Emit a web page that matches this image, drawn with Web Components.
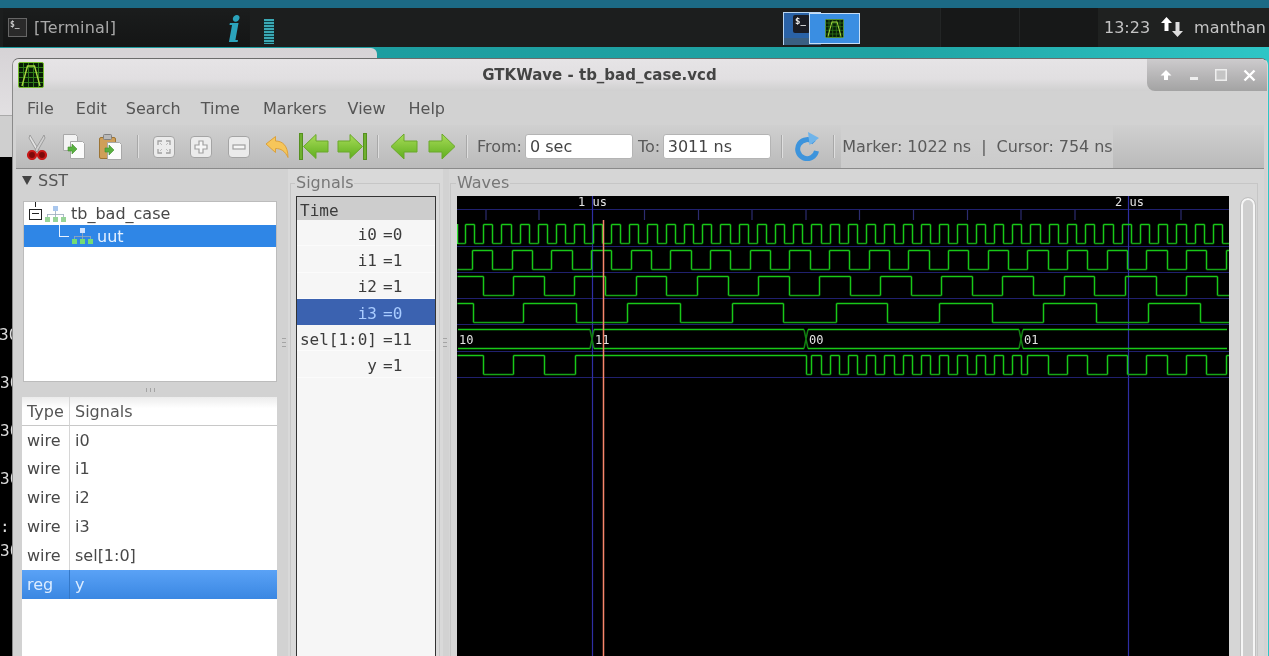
<!DOCTYPE html>
<html>
<head>
<meta charset="utf-8">
<title>GTKWave - tb_bad_case.vcd</title>
<style>
  html, body { margin: 0; height: 100%; background: #1c6a85; }
  body {
    display: flex;
    flex-direction: column;
    width: 1269px;
    height: 656px;
    overflow: hidden;
    font: 16px "DejaVu Sans", sans-serif;
    color: #484848;
    filter: blur(.55px);
  }
</style>
</head>
<body>
<desk-panel></desk-panel>
<desk-area>
  <term-window></term-window>
  <gtk-window name="GTKWave - tb_bad_case.vcd">
    <app-menu></app-menu>
    <app-toolbar></app-toolbar>
    <app-panes>
      <sst-pane></sst-pane>
      <pane-grip></pane-grip>
      <signal-pane></signal-pane>
      <pane-grip></pane-grip>
      <wave-pane></wave-pane>
    </app-panes>
  </gtk-window>
</desk-area>

<script>
// Small drawings shared by the elements below.
const waveLogo = (size) => `
  <svg width="${size}" height="${size}" viewBox="0 0 26 26" style="display:block">
    <rect x=".5" y=".5" width="25" height="25" rx="1.5" fill="#081c06" stroke="#78c030"/>
    <path d="M5.500 1v24M10.500 1v24M15.500 1v24M20.500 1v24M1 5.500h24M1 10.500h24M1 15.500h24M1 20.500h24" stroke="#2f7c18" stroke-width="1"/>
    <path d="M4 24 9.500 4H16.500L22 24" fill="none" stroke="#a6d840" stroke-width="1.400"/>
  </svg>`;

const hierarchy = (top, bottom) => `
  <svg width="21" height="16" viewBox="0 0 21 16" style="display:block">
    <rect x="8" y="0" width="5" height="5" fill="${top}"/>
    <path d="M10.500 5v3M2.500 8.500h16M2.500 8v3M10.500 8v3M18.500 8v3" stroke="#9ab" stroke-width=".8" fill="none"/>
    <rect x="0" y="11" width="5" height="5" fill="${bottom}"/>
    <rect x="8" y="11" width="5" height="5" fill="${bottom}"/>
    <rect x="16" y="11" width="5" height="5" fill="${bottom}"/>
  </svg>`;

const greenDefs = `<defs><linearGradient id="g" x1="0" y1="0" x2="0" y2="1">
  <stop offset="0" stop-color="#a8dc58"/><stop offset="1" stop-color="#5fae1e"/></linearGradient></defs>`;
const pageArrow = (x, y) => `<path d="M${x} ${y + 4}h4v-3l5 5-5 5v-3h-4z" fill="#58b040" stroke="#3f8f2a" stroke-width=".6"/>`;
const zoomBox = (inner) => `
  <rect x=".5" y=".5" width="21" height="21" rx="3.500" fill="#ebebeb" stroke="#a4a4a4"/>${inner}`;

const ICONS = {
  cut: [22, 26, `
    <path d="M4 1 13 16l-2 2L3 4z" fill="#e2e2e2" stroke="#8a8a8a" stroke-width=".7"/>
    <path d="M18 1 9 16l2 2 8-14z" fill="#d0d0d0" stroke="#8a8a8a" stroke-width=".7"/>
    <circle cx="6" cy="21" r="4" fill="#7d0a0a" stroke="#c81818" stroke-width="2.200"/>
    <circle cx="16" cy="21" r="4" fill="#7d0a0a" stroke="#c81818" stroke-width="2.200"/>`],
  copy: [22, 25, `
    <path d="M.5.500h12l2 2v14H.5z" fill="#f2f2f2" stroke="#a8a8a8"/>
    <path d="M7.500 7.500h12l2 2v15h-14z" fill="#fbfbfb" stroke="#a8a8a8"/>
    ${pageArrow(5, 9)}`],
  paste: [23, 26, `
    <rect x=".5" y="3.500" width="16" height="21" rx="1.500" fill="#cf9f58" stroke="#9c7434"/>
    <rect x="4.500" y=".5" width="8" height="5" rx="1" fill="#b8b8b8" stroke="#808080"/>
    <path d="M8.500 8.500h12l2 2v15h-14z" fill="#fbfbfb" stroke="#a8a8a8"/>
    ${pageArrow(6, 10)}`],
  fit: [22, 22, zoomBox(`<path d="M5 9V5h4M13 5h4v4M17 13v4h-4M9 17H5v-4" fill="none" stroke="#a0a0a0" stroke-width="1.300"/><path d="M9 9 7 7M13 9l2-2M13 13l2 2M9 13l-2 2" stroke="#bbb"/>`)],
  plus: [22, 22, zoomBox(`<path d="M9 5h4v4h4v4h-4v4H9v-4H5V9h4z" fill="#f6f6f6" stroke="#a0a0a0" stroke-width="1.200"/>`)],
  minus: [22, 22, zoomBox(`<rect x="5" y="9" width="12" height="4" fill="#f6f6f6" stroke="#a0a0a0" stroke-width="1.200"/>`)],
  undo: [24, 24, `<path d="M1 9 10.500 1.500v4.500C17 6 23 10 23 22.500 20 16 16 13.500 10.500 13.500V17.500Z" fill="#f6c65a" stroke="#dba13c" stroke-width="1"/>`],
  first: [30, 27, `${greenDefs}
    <rect x=".5" y=".5" width="3" height="26" fill="#6fb030" stroke="#559020"/>
    <path d="M4.500 13.500 17 1.500v6.500h12v11H17v6.500z" fill="url(#g)" stroke="#6aa82a"/>`],
  last: [30, 27, `${greenDefs}
    <rect x="26.500" y=".5" width="3" height="26" fill="#6fb030" stroke="#559020"/>
    <path d="M25.500 13.500 13 1.500v6.500H1v11h12v6.500z" fill="url(#g)" stroke="#6aa82a"/>`],
  left: [28, 27, `${greenDefs}<path d="M1 13.500 14 1v7h13v11H14v7z" fill="url(#g)" stroke="#6aa82a"/>`],
  right: [28, 27, `${greenDefs}<path d="M27 13.500 14 1v7H1v11h13v7z" fill="url(#g)" stroke="#6aa82a"/>`],
  reload: [26, 29, `
    <path d="M20 10.500A9.500 9.500 0 1 0 22.500 19" fill="none" stroke="#3d94dc" stroke-width="5"/>
    <path d="M14 0 25 6 15.500 13z" fill="#6fb4ea"/>`],
};

customElements.define("desk-panel", class extends HTMLElement {
  connectedCallback() {
    this.attachShadow({mode: "open"}).innerHTML = `
      <style>
        :host { display: block; flex: none; padding-top: 8px; background: #1c6a85; }
        #bar { display: flex; height: 39px; background: #1c1e1e; color: #a9a9a9; }
        #tasks {
          display: flex; align-items: center; width: 240px; margin-left: 3px; padding: 0 2px 0 5px;
          background: linear-gradient(#1b1d1d, #141515);
        }
        #term {
          display: flex; width: 15px; height: 15px; margin-right: 7px; padding: 1px;
          border: 1px solid #666; background: #2a2a2a; color: #ccc;
          font: bold 8px "DejaVu Sans Mono", monospace;
        }
        #name { letter-spacing: .2px; }
        #info { margin: 4px 7px 0 auto; color: #2ba3bb; font: italic bold 35px "DejaVu Serif", serif; line-height: 36px; }
        #meter {
          width: 10px; height: 25px; margin: 11px 0 0 14px;
          background: repeating-linear-gradient(#3ba8b4 0 2px, #0e3d42 2px 3px);
        }
        #pager { position: relative; width: 77px; margin-left: 509px; }
        #w1 {
          position: absolute; left: 0; top: 4px; width: 38px; height: 33px; box-sizing: border-box;
          background: linear-gradient(#2a62a6 0 25px, #3a5f82 25px);
          border-top: 1px solid #b8d4f0; border-left: 1px solid #b8d4f0;
        }
        #w1 span {
          position: absolute; left: 9px; top: 2px; width: 17px; height: 18px; padding: 1px 0 0 2px; box-sizing: border-box;
          border-radius: 2px; background: #1a1c24; color: #eee; font: bold 9px "DejaVu Sans Mono", monospace;
        }
        #w2 {
          position: absolute; left: 26px; top: 5px; width: 51px; height: 31px; box-sizing: border-box;
          background: #3a8ee2; border: 1px solid #c6def6;
          display: flex; align-items: center; justify-content: center;
        }
        #desks { display: flex; margin-left: 80px; }
        #desks div { width: 78px; background: #171818; border-left: 1px solid #232525; }
        #clock {
          display: flex; align-items: center; flex: 1; padding-left: 6px; color: #c4c4c4;
          background: #1f2120; white-space: nowrap;
        }
        #arrows { display: block; margin: 0 11px 0 11px; }
      </style>
      <div id="bar">
        <div id="tasks">
          <span id="term">$_</span><span id="name">[Terminal]</span>
          <span id="info">i</span>
        </div>
        <div id="meter"></div>
        <div id="pager">
          <div id="w1"><span>$_</span></div>
          <div id="w2">${waveLogo(19)}</div>
        </div>
        <div id="desks"><div></div><div></div></div>
        <div id="clock">
          <span>13:23</span>
          <svg id="arrows" width="22" height="21" viewBox="0 0 22 21">
            <path d="M5.500 0 11 6H7.500V14h-4V6H0z" fill="#fff"/>
            <path d="M16.500 20 22 14h-3.500V5h-4v9H11z" fill="#ddd"/>
          </svg>
          <span>manthan</span>
        </div>
      </div>`;
  }
});

customElements.define("desk-area", class extends HTMLElement {
  connectedCallback() {
    this.attachShadow({mode: "open"}).innerHTML = `
      <style>
        :host {
          display: block; flex: 1; position: relative; overflow: hidden;
          background: linear-gradient(90deg, #1c9a9e, #1fa3a3 70%, #2ec6c6);
        }
      </style>
      <slot></slot>`;
  }
});

// The terminal window lying behind, only its left edge shows.
customElements.define("term-window", class extends HTMLElement {
  connectedCallback() {
    this.attachShadow({mode: "open"}).innerHTML = `
      <style>
        :host {
          position: absolute; left: 0; top: 1px; width: 377px; height: 620px;
          display: flex; flex-direction: column; border-radius: 0 6px 0 0; overflow: hidden;
        }
        #title { height: 67px; flex: none; background: linear-gradient(#d6d3d6, #e2e0e2); border-bottom: 1px solid #aaa; }
        #menu { height: 41px; flex: none; background: #cfcfcf; }
        pre {
          flex: 1; margin: 0; padding: 166px 0 0 0; text-indent: -1px; background: #000; color: #ddd;
          font: 16px/24px "DejaVu Sans Mono", monospace;
        }
      </style>
      <div id="title"></div>
      <div id="menu"></div>
      <pre>30

30

30

30

:.
30</pre>`;
  }
});

customElements.define("gtk-window", class extends HTMLElement {
  connectedCallback() {
    this.attachShadow({mode: "open"}).innerHTML = `
      <style>
        :host {
          position: absolute; left: 12px; top: 11px; right: 1px; bottom: -20px;
          display: flex; flex-direction: column; box-sizing: border-box;
          border: 1px solid #d8d8d8; border-top-color: #6c6c6c; border-left-color: #8a8a8a;
          border-radius: 7px 7px 0 0; overflow: hidden; background: #d2d2d2;
        }
        #title {
          display: flex; align-items: center; flex: none; height: 32px;
          background: linear-gradient(#e6e4e6, #e1dfe1 62%, #d0d0d0);
        }
        #logo { width: 31px; padding-left: 5px; }
        #name { flex: 1; padding-left: 3px; text-align: center; font-weight: bold; font-size: 15px; color: #444; }
        #ctl {
          display: flex; align-items: center; align-self: stretch; justify-content: space-around;
          width: 120px; box-sizing: border-box; padding: 0 3px 0 5px;
          background: linear-gradient(#cdcbcd, #a3a3a3); border-radius: 0 0 0 8px;
        }
        #body { display: flex; flex-direction: column; flex: 1; min-height: 0; padding: 0 3px; }
      </style>
      <div id="title">
        <div id="logo">${waveLogo(26)}</div>
        <div id="name"></div>
        <div id="ctl">
          <svg width="12" height="12" viewBox="0 0 12 12"><path d="M6 1 11.500 6.500H8V11H4V6.500H.5z" fill="#fff"/></svg>
          <svg width="12" height="12" viewBox="0 0 12 12"><rect x="2" y="8" width="8" height="3" fill="#eee"/></svg>
          <svg width="12" height="12" viewBox="0 0 12 12"><rect x=".75" y=".75" width="10.500" height="10.500" fill="#c4c4c4" stroke="#eee" stroke-width="1.500"/></svg>
          <svg width="13" height="13" viewBox="0 0 13 13"><path d="M1.500 1.500 11.500 11.500M11.500 1.500 1.500 11.500" stroke="#fff" stroke-width="2.400"/></svg>
        </div>
      </div>
      <div id="body"><slot></slot></div>`;
    this.shadowRoot.querySelector("#name").textContent = this.getAttribute("name");
  }
});

customElements.define("app-menu", class extends HTMLElement {
  connectedCallback() {
    const items = [["File", 0], ["Edit", 22], ["Search", 19], ["Time", 20], ["Markers", 23], ["View", 21], ["Help", 23]];
    this.attachShadow({mode: "open"}).innerHTML = `
      <style>
        :host { display: flex; flex: none; align-items: center; height: 34px; padding-left: 11px; color: #555; }
      </style>
      ${items.map(([m, gap]) => `<span style="margin-left:${gap}px">${m}</span>`).join("")}`;
  }
});

customElements.define("tool-icon", class extends HTMLElement {
  connectedCallback() {
    const [w, h, body] = ICONS[this.getAttribute("name")];
    this.attachShadow({mode: "open"}).innerHTML = `
      <style>
        :host { display: flex; flex: none; align-items: center; justify-content: center; width: ${this.getAttribute("w") || 37}px; }
      </style>
      <svg width="${w}" height="${h}" viewBox="0 0 ${w} ${h}">${body}</svg>`;
  }
});

customElements.define("app-toolbar", class extends HTMLElement {
  connectedCallback() {
    this.attachShadow({mode: "open"}).innerHTML = `
      <style>
        :host {
          display: flex; flex: none; align-items: stretch; height: 43px; padding-left: 2px;
          background: linear-gradient(#d0d0d0, #bababa); border-bottom: 1px solid #8a8a8a; color: #5a5a5a;
        }
        .sep { flex: none; display: flex; justify-content: center; align-items: center; }
        .sep::after { content: ""; width: 1px; height: 23px; background: #a8a8a8; box-shadow: 1px 0 #dedede; }
        .text { align-self: center; flex: none; white-space: nowrap; }
        .entry {
          align-self: center; flex: none; height: 25px; box-sizing: border-box; padding-left: 4px;
          background: #fff; border: 1px solid #b4b4b4; border-radius: 3px; color: #444; line-height: 23px;
        }
        #status {
          display: flex; align-items: center; flex: none; width: 271px; margin-left: -2px; padding-left: 1px;
          white-space: pre; letter-spacing: -.06px;
          background: linear-gradient(#d0d0d0 30%, #cbcbcb); color: #5a5a5a;
        }
      </style>
      <tool-icon name="cut"></tool-icon>
      <tool-icon name="copy"></tool-icon>
      <tool-icon name="paste"></tool-icon>
      <div class="sep" style="width:16px"></div>
      <tool-icon name="fit" w="37.6"></tool-icon>
      <tool-icon name="plus" w="37.6"></tool-icon>
      <tool-icon name="minus" w="37.6"></tool-icon>
      <tool-icon name="undo" w="37.6"></tool-icon>
      <tool-icon name="first" w="37.6"></tool-icon>
      <tool-icon name="last" w="37.6"></tool-icon>
      <div class="sep" style="width:14.400px"></div>
      <tool-icon name="left" w="38"></tool-icon>
      <tool-icon name="right" w="38"></tool-icon>
      <div class="sep" style="width:12px"></div>
      <span class="text" style="margin:0 3px 0 4px">From:</span>
      <div class="entry" style="width:108px">0 sec</div>
      <span class="text" style="margin:0 2.500px 0 5px">To:</span>
      <div class="entry" style="width:108.500px">3011 ns</div>
      <div class="sep" style="width:20px"></div>
      <tool-icon name="reload" w="32"></tool-icon>
      <div class="sep" style="width:20px"></div>
      <div id="status">Marker: 1022 ns  |  Cursor: 754 ns</div>`;
  }
});

customElements.define("app-panes", class extends HTMLElement {
  connectedCallback() {
    this.attachShadow({mode: "open"}).innerHTML = `
      <style>:host { display: flex; flex: 1; min-height: 0; align-items: stretch; }</style>
      <slot></slot>`;
  }
});

customElements.define("pane-grip", class extends HTMLElement {
  connectedCallback() {
    this.attachShadow({mode: "open"}).innerHTML = `
      <style>
        :host { display: flex; flex: none; width: 8px; align-items: center; justify-content: center; padding-bottom: 160px; box-sizing: border-box; }
        div { width: 4px; height: 9px; background: repeating-linear-gradient(#a4a4a4 0 1px, transparent 1px 4px); }
      </style>
      <div></div>`;
  }
});

customElements.define("sst-pane", class extends HTMLElement {
  connectedCallback() {
    this.attachShadow({mode: "open"}).innerHTML = `
      <style>
        :host { display: flex; flex-direction: column; flex: none; width: 264px; }
        #head { display: flex; align-items: center; flex: none; height: 22px; margin-bottom: 10px; padding-left: 6px; gap: 6px; color: #555; }
        #tree {
          flex: none; box-sizing: border-box; width: 254px; height: 181px; margin-left: 7px;
          background: #fff; border: 1px solid #bcbcbc; overflow: hidden;
        }
        .node { display: flex; align-items: center; height: 23px; position: relative; white-space: nowrap; }
        .sel { height: 22px; background: #2f86e6; color: #e6f1ff; }
        #box {
          width: 11px; height: 9px; margin: 1px 3px 0 5px; border: 1.200px solid #222; flex: none;
          background: linear-gradient(#222, #222) center / 7px 1.200px no-repeat #fff;
        }
        #stem { position: absolute; left: 11px; top: 0; width: 1px; height: 5px; background: #222; }
        #el { width: 9px; height: 11px; margin: -11px 3px 0 35px; border: solid #e6f1ff; border-width: 0 0 1.500px 1.500px; flex: none; }
        .label { margin-left: 5px; }
        .sel .label { margin-left: 4px; }
        #grip { display: flex; flex: none; justify-content: center; height: 15px; align-items: center; width: 254px; margin-left: 7px; }
        #grip div { width: 9px; height: 4px; background: repeating-linear-gradient(90deg, #a4a4a4 0 1px, transparent 1px 4px); }
        #list {
          flex: 1; box-sizing: border-box; width: 255px; margin-left: 6px; background: #fff;
          display: grid; grid-template-columns: 48px 1fr; grid-auto-rows: 28.800px; align-content: start;
        }
        .cell { display: flex; align-items: center; padding-left: 5px; }
        .cell + .cell { padding-left: 5px; }
        .type { border-right: 1px solid #d6d6d6; }
        .hd { background: linear-gradient(#ececec, #fff 40%); border-bottom: 1px solid #c8c8c8; box-sizing: border-box; color: #555; padding-top: 2px; }
        .on { background: linear-gradient(#5aa2f6, #3a87e2); color: #dcecff; }
        .type.on { border-right-color: #3478c8; }
      </style>
      <div id="head">
        <svg width="10" height="9" viewBox="0 0 10 9"><path d="M0 0h10L5 9z" fill="#444"/></svg>
        <span>SST</span>
      </div>
      <div id="tree">
        <div class="node"><span id="stem"></span><span id="box"></span>${hierarchy("#a9c7ee", "#98d498")}<span class="label">tb_bad_case</span></div>
        <div class="node sel"><span id="el"></span>${hierarchy("#cfe3ff", "#74dc74")}<span class="label">uut</span></div>
      </div>
      <div id="grip"><div></div></div>
      <div id="list">
        <div class="cell hd type">Type</div><div class="cell hd">Signals</div>
        ${[["wire", "i0"], ["wire", "i1"], ["wire", "i2"], ["wire", "i3"], ["wire", "sel[1:0]"], ["reg", "y"]].map(([t, n]) => {
          const c = t === "reg" ? " on" : "";
          return `<div class="cell type${c}">${t}</div><div class="cell${c}">${n}</div>`;
        }).join("")}
      </div>`;
  }
});

const frameStyle = `
  fieldset { display: flex; flex: 1; min-width: 0; margin: 4px 0 0; border: 1px solid #c6c6c6; border-bottom: 0; }
  legend { margin-left: -1px; padding: 0 1px; height: 20px; line-height: 20px; color: #777; }`;

customElements.define("signal-pane", class extends HTMLElement {
  connectedCallback() {
    this.attachShadow({mode: "open"}).innerHTML = `
      <style>
        :host { display: flex; flex: none; width: 150px; padding: 0 3px 0 2px; background: #d9d9d9; margin-right: -2px; }
        ${frameStyle}
        fieldset { padding: 3px 3px 0 5px; }
        #list {
          flex: 1; border: 1px solid #333; border-bottom: 0; background: #f6f6f6;
          font: 16px "DejaVu Sans Mono", monospace; color: #3c3c3c;
        }
        #time { height: 23px; padding-left: 3px; line-height: 27px; background: #cdcdcd; }
        .row {
          display: flex; align-items: center; box-sizing: border-box; height: 26.300px; padding-top: 2px;
          white-space: pre; box-shadow: inset 0 -1px #fbfbfb;
        }
        .name { width: 80px; text-align: right; flex: none; }
        .val { margin-left: 6px; }
        .on { background: #3b62b0; color: #a9ccff; box-shadow: none; }
      </style>
      <fieldset>
        <legend>Signals</legend>
        <div id="list">
          <div id="time">Time</div>
          ${[["i0", "=0"], ["i1", "=1"], ["i2", "=1"], ["i3", "=0"], ["sel[1:0]", "=11"], ["y", "=1"]].map(([n, v]) =>
            `<div class="row${n === "i3" ? " on" : ""}"><span class="name">${n}</span><span class="val">${v}</span></div>`).join("")}
        </div>
      </fieldset>`;
  }
});

// Builds the green traces. Page coordinates are kept in the viewBox so the
// edges read the same as in the screenshot.
const X0 = 457, X1 = 1229;
const snap = (x) => Math.round(x) + .5;

function pulses(first, period, width, until) {
  const edges = [];
  for (let r = first; r < until; r += period) edges.push(r, r + width);
  return edges;
}

function trace(hi, lo, startHigh, edges) {
  let level = startHigh, x = X0, high = "", low = "", edge = "";
  for (const e of edges.concat(X1)) {
    const at = Math.min(e, X1);
    if (at <= X0) { level = !level; continue; }
    const a = snap(x), b = at >= X1 ? X1 : snap(at);
    const seg = `M${a} ${level ? hi : lo}H${b}`;
    if (level) high += seg; else low += seg;
    if (at < X1) edge += `M${b} ${hi}V${lo}`;
    level = !level;
    x = at;
  }
  return `<path d="${high}${edge}" stroke="#18c818"/><path d="${low}" stroke="#16a416"/>`;
}

function bus(top, bot, parts) {
  let out = "";
  parts.forEach(([from, to, label]) => {
    out += `<path d="M${from + 2} ${top}H${to - 2}M${from + 2} ${bot}H${to - 2}" stroke="#18c818"/>`;
    out += `<text x="${from + 3}" y="${bot - 5}" class="t">${label}</text>`;
    if (to < X1 - 2) out += `<path d="M${to - 2} ${top}L${to + 2} ${bot}M${to - 2} ${bot}L${to + 2} ${top}" stroke="#128012"/>`;
  });
  return out;
}

customElements.define("wave-view", class extends HTMLElement {
  connectedCallback() {
    const i0 = pulses(464.9, 18.24, 9.25, X1);
    const i1 = pulses(472, 39.67, 20.3, X1);
    const i2 = pulses(452.2, 61.13, 30.9, X1);
    const i3 = [472.7, 523.3, 576, 626.7, 680, 731.7, 783.3, 835.7, 887.3, 939.3, 992.3, 1043.3, 1096, 1148, 1200];
    const y = [483.3, 513.3, 544.3, 574.7, 805.7]
      .concat(i0.filter(e => e > 806 && e < 1022))
      .concat(i1.filter(e => e > 1025));
    const rowLines = [209.5, 246.5, 272.5, 298.5, 324.5, 351.5, 377.5];
    const ticks = [486, 539, 644.5, 698.5, 752, 806, 859.5, 913.5, 967.5, 1021, 1075, 1181];
    this.attachShadow({mode: "open"}).innerHTML = `
      <style>
        :host { display: block; flex: none; width: 772px; background: #000; overflow: hidden; }
        svg { display: block; fill: none; stroke-width: 1.500; }
        .t { fill: #e4e4e4; stroke: none; font: 12px "DejaVu Sans Mono", monospace; }
      </style>
      <svg width="772" height="460" viewBox="457 196 772 460">
        <path d="${rowLines.map(v => `M457 ${v}H1229`).join("")}" stroke="#20206e" stroke-width="1.200"/>
        <path d="${ticks.map(x => `M${x} 210V220`).join("")}" stroke="#2c2c70" stroke-width="1.200"/>
        <path d="M592.500 196V656M1128.500 196V656" stroke="#2e2ea4" stroke-width="1.200"/>
        <text x="578" y="206" class="t">1 us</text>
        <text x="1115" y="206" class="t">2 us</text>
        ${trace(224.5, 243.5, false, i0)}
        <path d="M457.500 224V244" stroke="#30e030"/>
        ${trace(250.5, 269.5, false, i1)}
        ${trace(276.5, 295.5, false, i2)}
        ${trace(303.5, 322.5, true, i3)}
        ${bus(329.5, 348.5, [[456, 592, "10"], [592, 806, "11"], [806, 1021, "00"], [1021, 1229, "01"]])}
        ${trace(355.5, 374.5, true, y)}
        <path d="M603.500 220V656" stroke="#f8866c" stroke-width="1.500"/>
      </svg>`;
  }
});

customElements.define("wave-pane", class extends HTMLElement {
  connectedCallback() {
    this.attachShadow({mode: "open"}).innerHTML = `
      <style>
        :host { display: flex; flex: 1; min-width: 0; padding: 0 6px 0 1px; background: #d6d6d6; }
        ${frameStyle}
        fieldset { padding: 3px 1px 0 6px; gap: 11px; }
        #thumb {
          flex: none; width: 16px; box-sizing: border-box; margin-top: 1px; margin-bottom: -20px;
          border: 1px solid #c0c0c0; border-radius: 8px; background: #cfcfcf;
          box-shadow: inset 0 0 0 2px #f6f6f6;
        }
      </style>
      <fieldset>
        <legend>Waves</legend>
        <wave-view></wave-view>
        <div id="thumb"></div>
      </fieldset>`;
  }
});
</script>
</body>
</html>
